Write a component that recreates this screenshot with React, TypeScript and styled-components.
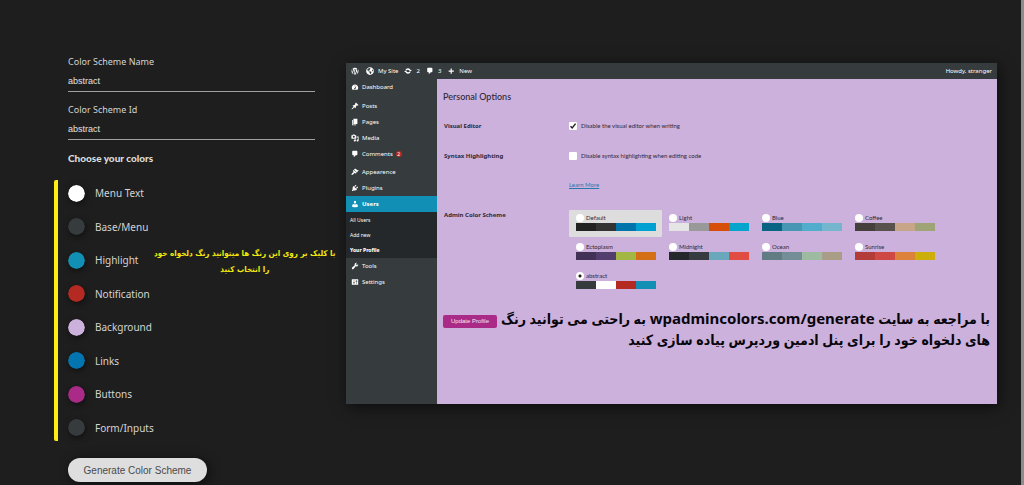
import React from "react";
import styled, { createGlobalStyle, css } from "styled-components";
import { FaWordpress, FaGlobeAmericas } from "react-icons/fa";

const GlobalStyle = createGlobalStyle`
  * { box-sizing: border-box; }
  body { margin: 0; background: #1e1e1e; }
  h1, h2, p, ul { margin: 0; padding: 0; }
  ul { list-style: none; }
  button, input { font: inherit; }
`;

const uiFont = `"Noto Sans", "Open Sans", sans-serif`;
const roundFont = `Lato, "Noto Sans", sans-serif`;
const ink = "#2f2838";

const Page = styled.main`
  display: flex;
  align-items: flex-start;
  min-height: 100vh;
  padding: 54px 24px 0 54px;
  background: #1e1e1e;
  border-right: 3px solid #8c8c8c;
  font-family: ${uiFont};
  color: #d4d4d4;
`;

const Generator = styled.form`
  flex: 0 0 292px;
`;

const Field = styled.div`
  display: flex;
  flex-direction: column;
  width: 247px;
  height: 38px;
  margin: 0 0 10px 14px;
  border-bottom: 1px solid #a0a0a0;
`;

const FieldLabel = styled.label`
  font-size: 9px;
  line-height: 16px;
`;

const TextInput = styled.input`
  width: 100%;
  height: 20px;
  margin-top: 1px;
  padding: 0;
  border: 0;
  outline: 0;
  background: transparent;
  color: #e2e2e2;
  font-family: "Liberation Sans", Arial, sans-serif;
  font-size: 9px;
`;

const Heading = styled.h1`
  margin: 0 0 14px 14px;
  font-family: ${roundFont};
  font-size: 10px;
  font-weight: 900;
  line-height: 16px;
  color: #dcdcdc;
`;

const ColorArea = styled.div`
  display: flex;
  border-left: 4px solid #ffee14;
  border-radius: 2px;
`;

const ColorList = styled.ul`
  display: flex;
  flex-direction: column;
  justify-content: space-between;
  flex: 0 0 92px;
  height: 261px;
  padding: 4px 0 4px 10px;
`;

const ColorRow = styled.li`
  display: flex;
  align-items: center;
  gap: 10px;
  height: 18px;
`;

const ColorLabel = styled.label`
  font-size: 10px;
  line-height: 16px;
`;

const ColorInput = styled.input`
  appearance: none;
  flex: none;
  width: 17px;
  height: 17px;
  padding: 0;
  border: 0;
  border-radius: 50%;
  background: transparent;
  box-shadow: 1px 2px 6px rgba(0, 0, 0, 0.5);
  &::-webkit-color-swatch-wrapper { padding: 0; }
  &::-webkit-color-swatch { border: 0; border-radius: 50%; }
`;

const Note = styled.p`
  flex: 0 0 182px;
  padding-top: 66px;
  font-family: "DejaVu Sans Condensed", "DejaVu Sans", sans-serif;
  font-size: 8px;
  font-weight: 700;
  line-height: 16px;
  text-align: center;
  white-space: nowrap;
  color: #f4ea0c;
`;

const GenerateButton = styled.button`
  width: 139px;
  height: 24px;
  margin: 17px 0 0 14px;
  padding: 0;
  border: 0;
  border-radius: 12px;
  background: #dedede;
  color: #4a4a4a;
  font-family: "Liberation Sans", Arial, sans-serif;
  font-size: 10px;
  box-shadow: 2px 2px 12px rgba(0, 0, 0, 0.6);
`;

const Preview = styled.section`
  flex: 1;
  min-width: 0;
  margin-top: 9px;
  box-shadow: 2px 3px 14px rgba(0, 0, 0, 0.6);
`;

const AdminBar = styled.header`
  display: flex;
  align-items: center;
  height: 16px;
  padding: 0 5px;
  background: #363b3d;
  color: #ffffff;
  font-size: 6px;
`;

const BarItem = styled.a<{ $gap?: number; $end?: boolean }>`
  display: flex;
  align-items: center;
  gap: 4px;
  margin-right: ${(p) => p.$gap ?? 6}px;
  color: inherit;
  text-decoration: none;
  ${(p) => p.$end && css`margin: 0 0 0 auto;`}
  svg { width: 8px; height: 8px; }
`;

const Workspace = styled.div`
  display: flex;
  min-height: 325px;
`;

const Sidebar = styled.nav`
  flex: 0 0 91px;
  background: #363b3d;
  color: #ffffff;
  font-family: ${uiFont};
  font-size: 6px;
`;

const MenuGroup = styled.ul<{ $gap?: number }>`
  margin-bottom: ${(p) => p.$gap ?? 0}px;
`;

const MenuLink = styled.a<{ $active?: boolean }>`
  display: flex;
  align-items: center;
  gap: 3px;
  height: 16px;
  padding-left: 5px;
  background: ${(p) => (p.$active ? "#118fb4" : "transparent")};
  font-weight: ${(p) => (p.$active ? 700 : 400)};
  color: inherit;
  text-decoration: none;
`;

const Badge = styled.span`
  width: 6px;
  height: 6px;
  border-radius: 50%;
  background: #b42a22;
  font-size: 5px;
  line-height: 6px;
  text-align: center;
`;

const SubMenu = styled.ul`
  padding-bottom: 1px;
  background: #25282a;
`;

const SubLink = styled.a<{ $current?: boolean }>`
  display: flex;
  align-items: center;
  height: 15px;
  padding-left: 4px;
  font-size: 5px;
  font-weight: ${(p) => (p.$current ? 800 : 400)};
  color: inherit;
  text-decoration: none;
`;

const Content = styled.div`
  flex: 1;
  min-width: 0;
  padding: 10px 7px 0 6px;
  background: #ccb1dc;
  color: ${ink};
  font-family: ${roundFont};
  font-size: 6px;
`;

const OptionsTitle = styled.h2`
  margin-bottom: 13px;
  font-size: 9px;
  font-weight: 500;
  line-height: 16px;
`;

const Row = styled.div<{ $height: number }>`
  display: grid;
  grid-template-columns: 126px 1fr;
  min-height: ${(p) => p.$height}px;
  line-height: 16px;
`;

const RowTitle = styled.span`
  padding-left: 1px;
  font-family: ${uiFont};
  font-weight: 700;
`;

const Choice = styled.label<{ $gap?: number; $line?: number }>`
  display: flex;
  align-items: center;
  gap: ${(p) => p.$gap ?? 4}px;
  height: ${(p) => p.$line ?? 16}px;
`;

const Check = styled.input`
  appearance: none;
  flex: none;
  width: 8px;
  height: 8px;
  margin: 0;
  border-radius: 1px;
  background: #fff;
  &:checked {
    background: #fff
      url("data:image/svg+xml,%3Csvg xmlns='http://www.w3.org/2000/svg' viewBox='0 0 8 8'%3E%3Cpath d='M1.5 4.2 3.2 6 6.6 1.6' fill='none' stroke='%23222' stroke-width='1.4'/%3E%3C/svg%3E")
      center / contain;
  }
`;

const Radio = styled.input`
  appearance: none;
  flex: none;
  width: 8px;
  height: 8px;
  margin: 0;
  border-radius: 50%;
  background: #fff;
  &:checked { background: radial-gradient(circle, #222 0 1px, #fff 2px); }
`;

const LearnMore = styled.a`
  color: #2678ae;
  text-decoration: underline;
`;

const SchemeGrid = styled.div`
  display: grid;
  grid-template-columns: repeat(4, 93px);
  grid-auto-rows: 27px;
  row-gap: 2px;
  margin-top: 3px;
`;

const SchemeCard = styled.div<{ $selected?: boolean }>`
  padding: 2px 6px 0 7px;
  border-radius: 1px;
  background: ${(p) => (p.$selected ? "#dddddd" : "transparent")};
`;

const Palette = styled.div`
  display: flex;
  height: 8px;
`;

const Shade = styled.span<{ $color: string }>`
  flex: 1;
  background: ${(p) => p.$color};
`;

const Footer = styled.div`
  display: flex;
  align-items: flex-start;
  justify-content: space-between;
  margin-top: 13px;
`;

const UpdateButton = styled.button`
  flex: none;
  width: 54px;
  height: 13px;
  margin-top: 7px;
  padding: 0;
  border: 0;
  border-radius: 2px;
  background: #aa2a88;
  color: #f6e8f2;
  font-family: "Liberation Sans", Arial, sans-serif;
  font-size: 6px;
  line-height: 13px;
`;

const Callout = styled.p`
  font-family: "Noto Sans", "DejaVu Sans Condensed", "DejaVu Sans", sans-serif;
  font-size: 14px;
  font-weight: 700;
  line-height: 21px;
  white-space: nowrap;
  color: #08060c;
`;

const SiteAddress = styled.span`
  font-size: 15px;
`;

const paths = {
  updates:
    "M10 3a7 7 0 0 1 6.500 4.500H19.500L16.800 11.500 13 8.500A4 4 0 0 0 6.300 8.500L3.500 7.500A7 7 0 0 1 10 3zM10 17a7 7 0 0 1-6.500-4.500H.5L3.200 8.500 7 11.500A4 4 0 0 0 13.700 11.500L16.500 12.500A7 7 0 0 1 10 17z",
  comment: "M5 2h9c1.1 0 2 .9 2 2v7c0 1.1-.9 2-2 2h-2l-5 5v-5H5c-1.1 0-2-.9-2-2V4c0-1.1.9-2 2-2z",
  plus: "M17 9v3h-5v5H9v-5H4V9h5V4h3v5h5z",
  dashboard:
    "M3.76 17h12.48c1.1-1.37 1.76-3.11 1.76-5 0-4.42-3.58-8-8-8s-8 3.58-8 8c0 1.89.66 3.63 1.76 5zM9 6h2v2H9zM13.500 7.500l-2 6.500a1.800 1.800 0 1 1-2.500-1.500z",
  post: "M10.44 3.02l1.82-1.82 6.36 6.35-1.83 1.82c-1.05-.68-2.48-.57-3.41.36l-.75.75c-.92.93-1.04 2.35-.35 3.41l-1.83 1.82-2.41-2.41-2.8 2.79c-.42.42-3.38 2.71-3.8 2.29s1.86-3.39 2.28-3.81l2.79-2.79L4.1 9.36l1.83-1.82c1.05.69 2.48.57 3.4-.36l.75-.75c.93-.92 1.05-2.35.36-3.41z",
  page: "M6 15V2h10v13H6zm-1 1h8v2H3V5h2v11z",
  media:
    "M13 11V4c0-.55-.45-1-1-1h-1.67L9 1H5L3.67 3H2c-.55 0-1 .45-1 1v7c0 .55.45 1 1 1h10c.55 0 1-.45 1-1zM7 4.5c1.38 0 2.5 1.12 2.5 2.5S8.38 9.5 7 9.5 4.5 8.38 4.5 7 5.62 4.5 7 4.5zM14 6h5v10.5c0 1.38-1.12 2.5-2.5 2.5S14 17.88 14 16.5s1.12-2.5 2.5-2.5c.17 0 .34.02.5.05V9h-3V6zm-4 8.05V13h2v3.5c0 1.38-1.12 2.5-2.5 2.5S7 17.88 7 16.5 8.12 14 9.5 14c.17 0 .34.02.5.05z",
  appearance:
    "M14.48 11.06L7.41 3.99l1.5-1.5c.5-.56 2.3-.47 3.51.32 1.21.8 1.43 1.28 2.91 2.1 1.18.64 2.45 1.26 4.45.85zm-.71.71L6.7 4.7 4.93 6.47c-.39.39-.39 1.02 0 1.41l1.06 1.06c.39.39.39 1.03 0 1.42-.6.6-1.43 1.11-2.21 1.69-.35.26-.7.53-1.01.84C1.43 14.23.4 16.08 1.4 17.07c.99 1 2.84-.03 4.18-1.36.31-.31.58-.66.85-1.02.57-.78 1.08-1.61 1.69-2.21.39-.39 1.02-.39 1.41 0l1.06 1.06c.39.39 1.02.39 1.41 0z",
  plugins:
    "M13.11 4.36L9.87 7.6 8 5.73l3.24-3.24c.35-.34 1.05-.2 1.56.32.52.51.66 1.21.31 1.55zm-8 1.77l.91-1.12 9.01 9.01-1.19.84c-.71.71-2.63 1.16-3.82 1.16H6.14L4.9 17.26c-.59.59-1.54.59-2.12 0-.59-.58-.59-1.53 0-2.12l1.24-1.24v-3.88c0-1.13.4-3.19 1.09-3.89zm7.26 3.97l3.24-3.24c.34-.35 1.04-.21 1.55.31.52.51.66 1.21.31 1.55l-3.24 3.25z",
  users:
    "M10 9.25c-2.27 0-2.73-3.44-2.73-3.44C7 4.02 7.82 2 9.97 2c2.16 0 2.98 2.02 2.71 3.81 0 0-.41 3.44-2.68 3.44zm0 2.57L12.72 10c2.39 0 4.52 2.33 4.52 4.53v2.49s-3.65 1.13-7.24 1.13c-3.65 0-7.24-1.13-7.24-1.13v-2.49c0-2.25 1.94-4.48 4.47-4.48z",
  tools:
    "M16.68 9.77c-1.34 1.34-3.3 1.67-4.95.99l-5.41 6.52c-.99.99-2.59.99-3.58 0s-.99-2.59 0-3.57l6.52-5.42c-.68-1.65-.35-3.61.99-4.95 1.28-1.28 3.12-1.62 4.72-1.06l-2.89 2.89 2.82 2.82 2.86-2.87c.53 1.58.18 3.39-1.08 4.65z",
  settings:
    "M18 16V4c0-.55-.45-1-1-1H3c-.55 0-1 .45-1 1v12c0 .55.45 1 1 1h14c.55 0 1-.45 1-1zM8 11h1c.55 0 1 .45 1 1s-.45 1-1 1H8v1.5c0 .28-.22.5-.5.5s-.5-.22-.5-.5V13H6c-.55 0-1-.45-1-1s.45-1 1-1h1V5.5c0-.28.22-.5.5-.5s.5.22.5.5V11zm5-2h-1c-.55 0-1-.45-1-1s.45-1 1-1h1V5.5c0-.28.22-.5.5-.5s.5.22.5.5V7h1c.55 0 1 .45 1 1s-.45 1-1 1h-1v5.5c0 .28-.22.5-.5.5s-.5-.22-.5-.5V9z",
};

type IconName = keyof typeof paths;

const Icon = ({ name }: { name: IconName }) => (
  <svg width="8" height="8" viewBox="0 0 20 20" fill="currentColor" fillRule="evenodd" aria-hidden="true">
    <path d={paths[name]} />
  </svg>
);

const colors = [
  ["Menu Text", "#ffffff"],
  ["Base/Menu", "#363b3d"],
  ["Highlight", "#118fb4"],
  ["Notification", "#b42a22"],
  ["Background", "#ccb1dc"],
  ["Links", "#0275b0"],
  ["Buttons", "#aa2a88"],
  ["Form/Inputs", "#363b3d"],
];

const menu: { gap: number; items: [IconName, string][] }[] = [
  { gap: 3, items: [["dashboard", "Dashboard"]] },
  { gap: 2, items: [["post", "Posts"], ["page", "Pages"], ["media", "Media"], ["comment", "Comments"]] },
  { gap: 0, items: [["appearance", "Appearence"], ["plugins", "Plugins"], ["users", "Users"]] },
];

const schemes: [string, string[]][] = [
  ["Default", ["#222222", "#333333", "#0073aa", "#00a0d2"]],
  ["Light", ["#e5e5e5", "#999999", "#d64e07", "#04a4cc"]],
  ["Blue", ["#096484", "#4796b3", "#52accc", "#74b6ce"]],
  ["Coffee", ["#46403c", "#59524c", "#c7a589", "#9ea476"]],
  ["Ectoplasm", ["#413256", "#523f6d", "#a3b745", "#d46f15"]],
  ["Midnight", ["#25282b", "#363b3f", "#69a8bb", "#e14d43"]],
  ["Ocean", ["#627c83", "#738e96", "#9ebaa0", "#aa9d88"]],
  ["Sunrise", ["#b43c38", "#cf4944", "#dd823b", "#ccaf0b"]],
  ["abstract", ["#363b3d", "#ffffff", "#b42a22", "#118fb4"]],
];

export default function App() {
  return (
    <>
      <GlobalStyle />
      <Page>
        <Generator onSubmit={(e) => e.preventDefault()}>
          <Field>
            <FieldLabel htmlFor="scheme-name">Color Scheme Name</FieldLabel>
            <TextInput id="scheme-name" defaultValue="abstract" />
          </Field>
          <Field>
            <FieldLabel htmlFor="scheme-id">Color Scheme Id</FieldLabel>
            <TextInput id="scheme-id" defaultValue="abstract" />
          </Field>
          <Heading>Choose your colors</Heading>
          <ColorArea>
            <ColorList>
              {colors.map(([name, value]) => (
                <ColorRow key={name}>
                  <ColorInput type="color" id={`color-${name}`} defaultValue={value} />
                  <ColorLabel htmlFor={`color-${name}`}>{name}</ColorLabel>
                </ColorRow>
              ))}
            </ColorList>
            <Note dir="rtl" lang="fa">
              با کلیک بر روی این رنگ ها میتوانید رنگ دلخواه خود
              <br />
              را انتخاب کنید
            </Note>
          </ColorArea>
          <GenerateButton type="submit">Generate Color Scheme</GenerateButton>
        </Generator>

        <Preview>
          <AdminBar>
            <BarItem href="#wp" aria-label="WordPress" $gap={7}><FaWordpress /></BarItem>
            <BarItem href="#site">
              <FaGlobeAmericas />My Site
            </BarItem>
            <BarItem href="#updates"><Icon name="updates" />2</BarItem>
            <BarItem href="#comments"><Icon name="comment" />3</BarItem>
            <BarItem href="#new"><Icon name="plus" />New</BarItem>
            <BarItem href="#profile" $end>Howdy, stranger</BarItem>
          </AdminBar>
          <Workspace>
            <Sidebar>
              {menu.map((group) => (
                <MenuGroup key={group.items[0][1]} $gap={group.gap}>
                  {group.items.map(([icon, text]) => (
                    <li key={text}>
                      <MenuLink href={`#${icon}`} $active={text === "Users"}>
                        <Icon name={icon} />
                        {text}
                        {text === "Comments" && <Badge>2</Badge>}
                      </MenuLink>
                    </li>
                  ))}
                </MenuGroup>
              ))}
              <SubMenu>
                <li><SubLink href="#all">All Users</SubLink></li>
                <li><SubLink href="#add">Add new</SubLink></li>
                <li><SubLink href="#your" $current>Your Profile</SubLink></li>
              </SubMenu>
              <MenuGroup>
                <li><MenuLink href="#tools"><Icon name="tools" />Tools</MenuLink></li>
                <li><MenuLink href="#settings"><Icon name="settings" />Settings</MenuLink></li>
              </MenuGroup>
            </Sidebar>
            <Content>
              <OptionsTitle>Personal Options</OptionsTitle>
              <Row $height={30}>
                <RowTitle>Visual Editor</RowTitle>
                <Choice><Check type="checkbox" defaultChecked />Disable the visual editor when writing</Choice>
              </Row>
              <Row $height={59}>
                <RowTitle>Syntax Highlighting</RowTitle>
                <div>
                  <Choice><Check type="checkbox" />Disable syntax highlighting when editing code</Choice>
                  <Choice as="div" $line={42}><LearnMore href="#more">Learn More</LearnMore></Choice>
                </div>
              </Row>
              <Row $height={88}>
                <RowTitle>Admin Color Scheme</RowTitle>
                <SchemeGrid>
                  {schemes.map(([name, shades]) => (
                    <SchemeCard key={name} $selected={name === "Default"}>
                      <Choice $gap={2} $line={11}>
                        <Radio type="radio" name="scheme" defaultChecked={name === "abstract"} />
                        {name}
                      </Choice>
                      <Palette>
                        {shades.map((shade) => <Shade key={shade} $color={shade} />)}
                      </Palette>
                    </SchemeCard>
                  ))}
                </SchemeGrid>
              </Row>
              <Footer>
                <UpdateButton type="button">Update Profile</UpdateButton>
                <Callout dir="rtl" lang="fa">
                  با مراجعه به سایت <SiteAddress>wpadmincolors.com/generate</SiteAddress> به راحتی می توانید رنگ
                  <br />
                  های دلخواه خود را برای پنل ادمین وردپرس پیاده سازی کنید
                </Callout>
              </Footer>
            </Content>
          </Workspace>
        </Preview>
      </Page>
    </>
  );
}
